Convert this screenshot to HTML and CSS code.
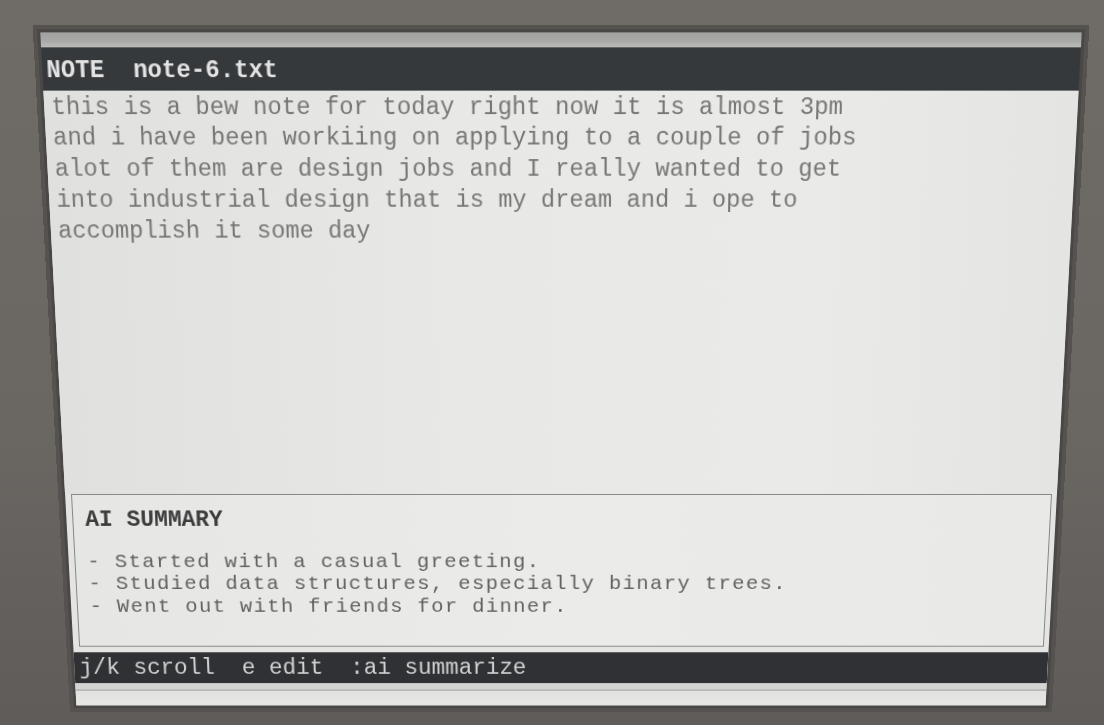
FILE: index.html
```html
<!DOCTYPE html>
<html lang="en">
<head>
<meta charset="utf-8">
<title>note-6.txt</title>
<link rel="stylesheet" href="styles.css">
</head>
<body>
<div class="bezel">
  <div class="screen">
    <div class="top-strip"></div>
    <div class="header"><span class="tag">NOTE</span>  <span class="filename">note-6.txt</span></div>
    <div class="note-body">
      <div class="line">this is a bew note for today right now it is almost 3pm</div>
      <div class="line">and i have been workiing on applying to a couple of jobs</div>
      <div class="line">alot of them are design jobs and I really wanted to get</div>
      <div class="line">into industrial design that is my dream and i ope to</div>
      <div class="line">accomplish it some day</div>
    </div>
    <div class="summary">
      <div class="summary-title">AI SUMMARY</div>
      <div class="summary-list">
        <div class="item">- Started with a casual greeting.</div>
        <div class="item">- Studied data structures, especially binary trees.</div>
        <div class="item">- Went out with friends for dinner.</div>
      </div>
    </div>
    <div class="footer">j/k scroll  e edit  :ai summarize</div>
    <div class="bottom-strip"><div class="bottom-line"></div></div>
  </div>
</div>
</body>
</html>
```
FILE: styles.css
```css
html, body {
  margin: 0;
  padding: 0;
  width: 1104px;
  height: 725px;
  overflow: hidden;
}

body {
  background: linear-gradient(180deg, #6f6b67 0%, #6a6662 60%, #5f5c59 100%);
  font-family: "Liberation Mono", "DejaVu Sans Mono", monospace;
}

.bezel {
  width: 1104px;
  height: 725px;
  padding-top: 42.6px;
  box-sizing: border-box;
}

.screen {
  width: 1004px;
  height: 676px;
  margin-left: 59px;
  display: flex;
  flex-direction: column;
  background: #e4e4e2;
  overflow: hidden;
  transform-origin: 50% 50%;
  transform: perspective(1000px) rotateX(-6.11deg);
  box-shadow: 0 0 0 3px #4a4846, 0 0 0 7px #55524f;
  font-size: 23.3px;
}

.top-strip {
  height: 14px;
  flex: none;
  background: linear-gradient(180deg, #a2a3a1 0%, #a8a9a7 55%, #bcbcba 100%);
}

.header {
  flex: none;
  height: 41px;
  box-sizing: border-box;
  padding: 2px 0 0 4px;
  line-height: 40px;
  background: #36393c;
  color: #e4e4e4;
  font-weight: bold;
  white-space: pre;
  overflow: hidden;
}

.note-body {
  flex: none;
  height: 398px;
  box-sizing: border-box;
  padding: 1.5px 0 0 7px;
  background: linear-gradient(90deg, #e0e0de 0%, #e8e8e6 40%, #eaeae8 75%, #e4e4e2 100%);
  color: #767676;
  line-height: 29.9px;
}

.line {
  white-space: pre;
}

.summary {
  flex: none;
  height: 160px;
  box-sizing: border-box;
  margin: 0 5px 6px 6px;
  border: 1px solid #858583;
  padding: 11px 0 0 12px;
  background: linear-gradient(90deg, #e6e6e4 0%, #ebebe9 50%, #e9e9e7 100%);
}

.summary-title {
  line-height: 30px;
  font-weight: bold;
  color: #3d3d3d;
  white-space: pre;
}

.summary-list {
  margin-top: 16.5px;
  color: #626262;
  font-size: 21px;
  letter-spacing: 1.4px;
  line-height: 23.8px;
}

.item {
  white-space: pre;
}

.footer {
  flex: none;
  height: 33px;
  box-sizing: border-box;
  padding: 2px 0 0 5px;
  line-height: 31px;
  background: #2f3134;
  color: #d2d2d2;
  white-space: pre;
  overflow: hidden;
}

.bottom-strip {
  flex: none;
  height: 24px;
  padding-top: 7px;
  box-sizing: border-box;
  background: linear-gradient(180deg, #d4d4d2 0%, #d4d4d2 28%, #e2e2e0 32%, #e6e6e4 100%);
}

.bottom-line {
  height: 1px;
  background: #9a9a98;
}
```
